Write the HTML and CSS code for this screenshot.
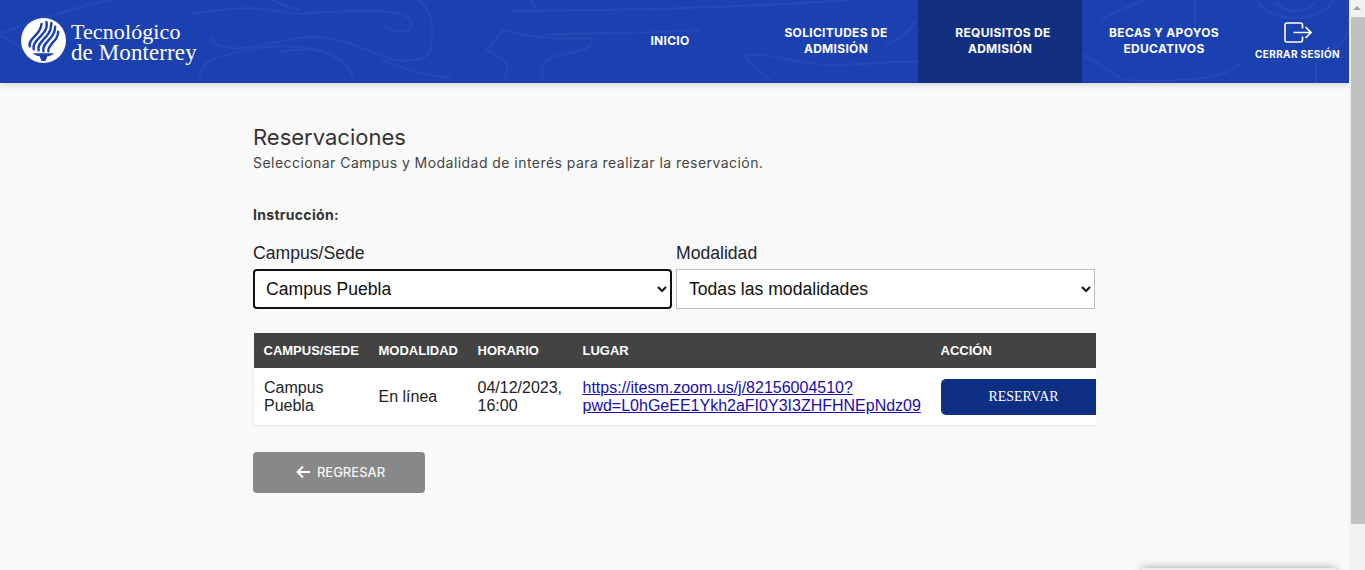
FILE: index.html
```html
<!DOCTYPE html>
<html lang="es">
<head>
<meta charset="utf-8">
<title>Reservaciones</title>
<link rel="stylesheet" href="styles.css">
</head>
<body>
<div class="app">
  <div class="page">
    <header class="topbar">
      <svg class="swirls" viewBox="0 0 1349 83" preserveAspectRatio="none" aria-hidden="true">
        <path d="M0 33C40 20 70 8 120 -2M0 35C20 45 35 60 45 62"/>
        <path d="M190 14C240 6 260 6 290 14C340 12 370 8 397 13C416 16 415 32 400 32C392 32 388 29 385 26"/>
        <path d="M270 -2C280 5 292 8 300 10"/>
        <path d="M417 -2C436 15 434 35 430 50C428 60 415 62 395 60C360 50 340 33 300 38C270 42 250 50 232 48C215 46 208 40 214 38"/>
        <path d="M200 80C200 60 215 56 250 50C285 42 345 45 353 78M280 52C310 46 345 52 353 78M380 60C400 66 420 76 452 78"/>
        <path d="M503 30L487 50C495 56 515 60 505 78M503 30C530 38 560 40 590 38C596 45 590 50 560 55C540 60 540 70 543 80"/>
        <path d="M545 35C600 32 640 34 700 30M512 11C600 10 700 10 850 0M530 -2C532 3 534 6 536 8"/>
        <path d="M745 55C770 52 800 65 830 65C870 65 900 60 918 62M745 57C755 70 765 75 772 82"/>
        <path d="M885 46C905 35 912 30 915 20"/>
        <path d="M1195 -2V50M1100 20C1120 10 1130 5 1150 -2M1082 55C1100 60 1110 75 1125 80C1180 82 1230 80 1240 62"/>
        <path d="M1258 2C1270 22 1320 26 1335 -2M1275 2C1285 14 1305 14 1315 2M1320 60C1335 50 1345 40 1349 30M1316 62V83"/>
      </svg>
      <a class="brand" href="#">
        <svg class="brand-mark" viewBox="0 0 46 46" aria-hidden="true">
          <circle cx="23" cy="23" r="23" fill="#fff"/>
          <g fill="none" stroke="#1b41b1" stroke-width="2.5" stroke-linecap="round">
            <path d="M9 29C7 23 15 19 18 14C20 11 21 9 21 6"/>
            <path d="M13 32C11 25 20 20 24 14C26 11 27 8 26 4"/>
            <path d="M18 33C16 27 24 22 28 16C30 13 31 9 31 5"/>
            <path d="M23 34C21 28 28 24 32 18C34 15 35 12 35 9"/>
            <path d="M28 34C27 30 32 26 36 21C37 19 38 17 38 14"/>
          </g>
          <path d="M12 36H34C32 38 29 39 27 39L25 44H21L19 39C17 39 14 38 12 36Z" fill="#1b41b1"/>
        </svg>
        <span class="brand-name">Tecnológico<br><span class="brand-line">de Monterrey</span></span>
      </a>
      <nav class="nav">
        <a class="nav-item nav-first" href="#">INICIO</a>
        <a class="nav-item" href="#">SOLICITUDES DE<br>ADMISIÓN</a>
        <a class="nav-item nav-active" href="#"><span class="nav-shift">REQUISITOS DE</span><br>ADMISIÓN</a>
        <a class="nav-item" href="#">BECAS Y APOYOS<br>EDUCATIVOS</a>
        <a class="logout" href="#">
          <svg class="logout-icon" viewBox="0 0 28 21" aria-hidden="true">
            <path d="M18.5 6.5V3a2 2 0 0 0-2-2H3a2 2 0 0 0-2 2v15a2 2 0 0 0 2 2h13.500a2 2 0 0 0 2-2v-3.500M9.500 10.500h17.500M21.500 5l5.500 5.500-5.500 5.500" fill="none" stroke="#fff" stroke-width="1.600"/>
          </svg>
          <span>CERRAR SESIÓN</span>
        </a>
      </nav>
    </header>

    <main class="content">
      <h1 class="title">Reservaciones</h1>
      <p class="lead">Seleccionar Campus y Modalidad de interés para realizar la reservación.</p>
      <p class="instruction">Instrucción:</p>

      <div class="filters">
        <label class="field">
          <span class="field-label">Campus/Sede</span>
          <select class="select select-focus">
            <option>Campus Puebla</option>
          </select>
        </label>
        <label class="field">
          <span class="field-label">Modalidad</span>
          <select class="select">
            <option>Todas las modalidades</option>
          </select>
        </label>
      </div>

      <div class="table-wrap">
        <table class="table">
          <thead>
            <tr>
              <th class="c-campus">CAMPUS/SEDE</th>
              <th class="c-mod">MODALIDAD</th>
              <th class="c-hor">HORARIO</th>
              <th class="c-lug">LUGAR</th>
              <th class="c-acc">ACCIÓN</th>
            </tr>
          </thead>
          <tbody>
            <tr>
              <td class="c-campus">Campus Puebla</td>
              <td class="c-mod">En línea</td>
              <td class="c-hor">04/12/2023, 16:00</td>
              <td class="c-lug"><a class="link" href="#">https://itesm.zoom.us/j/82156004510?<br>pwd=L0hGeEE1Ykh2aFI0Y3I3ZHFHNEpNdz09</a></td>
              <td class="c-acc"><button class="reserve" type="button">RESERVAR</button></td>
            </tr>
          </tbody>
        </table>
      </div>

      <a class="back" href="#">
        <svg class="back-icon" viewBox="0 0 14 14" aria-hidden="true">
          <path d="M14 7H1.500M7 1.500 1.500 7 7 12.500" fill="none" stroke="#fff" stroke-width="1.800"/>
        </svg>
        <span>REGRESAR</span>
      </a>
    </main>
    <div class="corner-shadow"></div>
  </div>
  <aside class="scrollbar" aria-hidden="true">
    <div class="scroll-arrow"></div>
    <div class="scroll-thumb"></div>
  </aside>
</div>
</body>
</html>
```
FILE: styles.css
```css
* { box-sizing: border-box; }
html, body { margin: 0; height: 570px; overflow: hidden; }
body { font-family: "Liberation Sans", Arial, sans-serif; background: #f9f9f9; color: #212529; }

.app { display: flex; height: 570px; }
.page { flex: 1; min-width: 0; position: relative; overflow: hidden; }

.topbar {
  position: relative; height: 83px; background: #1b41b1;
  display: flex; justify-content: space-between; align-items: stretch;
  box-shadow: 0 2px 6px rgba(0,0,0,.14);
}
.swirls { position: absolute; inset: 0; width: 100%; height: 100%; }
.swirls path { fill: none; stroke: #2648b5; stroke-width: 2.2; }

.brand { position: relative; display: flex; align-items: center; gap: 5px; padding: 0 0 0 21px; color: #fff; text-decoration: none; height: 83px; }
.brand-mark { width: 45px; height: 45px; margin-top: -2px; }
.brand-name { font-family: "Liberation Serif", serif; font-size: 22px; line-height: 21px; letter-spacing: .1px; }
.brand-line { font-size: 23px; }

.nav { position: relative; display: flex; align-items: stretch; }
.nav-item {
  width: 164px; display: block; text-align: center; padding-top: 25px;
  color: #fff; text-decoration: none; font-family: Inter, sans-serif; font-weight: 700;
  font-size: 12px; line-height: 16px; letter-spacing: .3px;
}
.nav-first { width: 168px; padding-top: 33px; }
.nav-active { background: #12307f; }
.nav-shift { margin-left: 6px; }
.logout {
  width: 103px; display: flex; flex-direction: column; align-items: center; padding-top: 22px;
  color: #fff; text-decoration: none; font-family: Inter, sans-serif; font-weight: 700;
  font-size: 10px; line-height: 14px; letter-spacing: .35px;
}
.logout-icon { width: 28px; height: 21px; margin-bottom: 4px; margin-left: 1px; }

.content { padding: 42px 0 0 253px; width: 1096px; }
.title { margin: 0; font-family: Inter, sans-serif; font-weight: 400; font-size: 22px; line-height: 25px; color: #333; }
.lead { margin: 3px 0 0; font-family: Inter, sans-serif; font-size: 14px; line-height: 20px; letter-spacing: .45px; color: #444; }
.instruction { margin: 32px 0 0; font-family: Inter, sans-serif; font-weight: 700; font-size: 14px; line-height: 20px; letter-spacing: .3px; color: #333; }

.filters { display: flex; gap: 4px; margin-top: 18px; width: 842px; }
.field { flex: 1; min-width: 0; display: flex; flex-direction: column; }
.field-label { font-size: 17.6px; line-height: 20px; color: #212529; margin-bottom: 6px; height: 20px; padding-top: 0; }
.select {
  width: 100%; height: 40px; padding: 0 8px; font-family: "Liberation Sans", Arial, sans-serif; font-size: 17.6px;
  color: #111; background: #fff; border: 1px solid #bdbdbd; border-radius: 0; outline: none;
}
.select-focus { border: 2px solid #111; border-radius: 4px; padding: 0 7px; }

.table-wrap { margin-top: 24px; width: 843px; overflow: hidden; }
.table { border-collapse: collapse; table-layout: fixed; width: 860px; font-size: 16px; }
.table th {
  height: 35px; padding: 0 0 1px 10px; background: #434343; color: #fff; text-align: left;
  font-size: 13px; font-weight: 700; white-space: nowrap;
}
.table td { height: 57px; padding: 1px 10px 0; background: #fff; color: #222; line-height: 18px; border-bottom: 1px solid #e8e8e8; vertical-align: middle; }
.table td.c-campus { padding-left: 10px; padding-right: 30px; border-left: 1px solid #ececec; }
.c-campus { width: 115px; }
.c-mod { width: 99px; }
.c-hor { width: 105px; }
.c-lug { width: 358px; }
.c-acc { width: 183px; }
.table td.c-acc { padding: 1px 0 0 10px; }
.table td.c-lug { white-space: nowrap; }
.link { color: #1a0dab; }
.reserve {
  display: block; width: 166px; height: 36px; border: 0; border-radius: 5px; background: #0e2f83; color: #fff;
  font-family: "Liberation Serif", serif; font-size: 14px; padding: 0;
}

.back {
  margin-top: 26px; width: 172px; height: 41px; display: flex; align-items: center; justify-content: center; gap: 7px;
  background: #888; border-radius: 4px; color: #f4f4f4; text-decoration: none; padding-left: 3px;
  font-family: Inter, sans-serif; font-size: 13px; font-weight: 500;
}
.back-icon { width: 14px; height: 14px; }

.corner-shadow { position: absolute; left: 1142px; bottom: -8px; width: 194px; height: 10px; box-shadow: 0 0 8px rgba(0,0,0,.35); background: #eee; }

.scrollbar { width: 16px; background: #f1f1f1; display: flex; flex-direction: column; }
.scroll-arrow { height: 17px; display: flex; justify-content: center; padding-top: 6px; }
.scroll-arrow::before { content: ""; width: 0; height: 0; border-left: 4px solid transparent; border-right: 4px solid transparent; border-bottom: 4px solid #a3a3a3; }
.scroll-thumb { height: 507px; margin-left: 2px; background: #c1c1c1; }
```
